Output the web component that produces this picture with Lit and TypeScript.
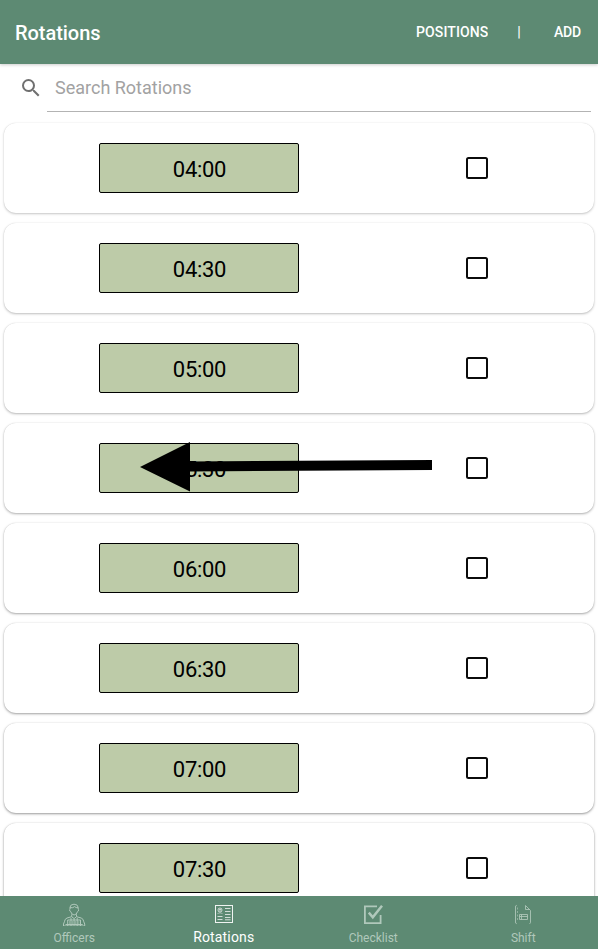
import { LitElement, html, css, svg } from "lit";
import { customElement, property } from "lit/decorators.js";
import { classMap } from "lit/directives/class-map.js";

const TIMES = ["04:00", "04:30", "05:00", "05:30", "06:00", "06:30", "07:00", "07:30"];

const officers = svg`
  <path d="M8 7V5.2Q8.2 2.4 12 2.2Q16 2.4 16.2 5.4V7M8 5.7Q11 6.2 12.6 4.6Q14 6 16 5.7M8.4 7Q7.2 7.2 7.8 9L8.7 9.6Q9.5 12.6 12.1 13Q14.7 12.6 15.5 9.6L16.4 9Q17 7.2 15.8 7M9.7 12.3V14.7L5 16Q2.6 17 2.4 19.8L1.5 22V24H22.7V22L21.8 19.8Q21.6 17 19.2 16L14.5 14.7V12.3M9.7 14.7L12.1 16.6L14.5 14.7M5.7 18H18.5V24M5.7 18V24M9 16V24M15.2 16V24M12.1 17V23.5M3.5 22.5H20.7"/>
  <path d="M7.6 19v4M10.6 19v4M13.6 19v4M16.8 19v4" opacity=".6"/>`;
const rotations = svg`
  <g opacity=".9">
    <rect x="3.5" y="3.5" width="17" height="17"/>
    <circle cx="8" cy="8" r="2" opacity=".75"/><circle cx="8" cy="7.8" r=".5"/>
    <path d="M5.5 11.5q2.5-1.4 5 0" opacity=".5"/>
    <path d="M13 6.5h5.5M13 9.5h5.5M13 12.5h5.5M5.5 14.5h5M13 15.5h5.5M5.5 17.5h5M13 17.8h5.5" stroke-width=".8"/>
  </g>`;
const checklist = svg`
  <path stroke-width="1.8" d="M16 4.4H3.9V21.1H19.6V13"/>
  <path stroke-width="2.5" d="M7.8 10.6L11.8 15.2L21 3.8"/>`;
const shift = svg`
  <path d="M5.8 3.5H5.2Q4.5 3.5 4.5 5V20Q4.5 21.5 5.2 21.5H5.8M14.5 3.5V7.5H19M14.5 3.5L19.5 8.5V20.5Q19.5 21.5 18.5 21.5M8.5 12.5H16.5V17.5H8.5ZM8.5 14.5H16.5M10.5 12.5V17.5" opacity=".85"/>
  <path d="M6.5 5.5v2M6.5 9v2M6.5 12.5v2M6.5 16v2" opacity=".6"/>`;

@customElement("rotation-card")
export class RotationCard extends LitElement {
  @property() time = "";
  @property({ type: Boolean }) arrow = false;

  static styles = css`
    :host { display: block; position: relative; height: 90px; flex: none; }
    .card {
      height: 100%; border-radius: 12px; background: #fff;
      box-shadow: 0 1px 2.5px rgba(0, 0, 0, var(--depth, .25)), 0 0 1px rgba(0, 0, 0, .14);
      display: grid; grid-template-columns: 390px 166px; align-items: center;
    }
    .time {
      box-sizing: border-box; width: 200px; height: 50px; justify-self: center;
      border: 1px solid #000; border-radius: 2px; background: #bdcba8;
      font-size: 22px; line-height: 51px; text-align: center; color: #000;
      letter-spacing: -.3px; padding-left: 1px;
    }
    .check {
      box-sizing: border-box; width: 22px; height: 22px; justify-self: center;
      border: 2px solid #0b0b0b; border-radius: 2.5px;
    }
    .arrow { position: absolute; left: 136px; top: 19px; width: 292px; height: 50px; }
  `;

  render() {
    return html`
      <div class="card">
        <div class="time">${this.time}</div>
        <div class="check"></div>
      </div>
      ${this.arrow
        ? html`<svg class="arrow" viewBox="0 0 292 50">
            <path d="M0 25L50 0V19.5L292 18V28L50 29.5V49.5Z" />
          </svg>`
        : ""}
    `;
  }
}

@customElement("app-root")
export class AppRoot extends LitElement {
  static styles = css`
    :host {
      display: flex; flex-direction: column; height: 949px; overflow: hidden;
      background: #fff; font-family: Roboto, sans-serif;
    }
    header {
      position: relative; z-index: 1; box-sizing: border-box; flex: none; height: 64px;
      display: flex; align-items: center; padding: 0 17px 0 15px;
      background: #5d8a73; color: #fff; box-shadow: 0 1px 3px rgba(0, 0, 0, .2);
    }
    h1 { margin: 2px auto 0 0; font-size: 20px; font-weight: 500; line-height: 24px; letter-spacing: -.05px; }
    .action { font-size: 14px; font-weight: 500; line-height: 20px; }
    .positions { width: 72px; overflow: hidden; white-space: nowrap; letter-spacing: .1px; }
    .bar { width: 66px; text-align: center; box-sizing: border-box; padding-right: 4px; }
    .add { letter-spacing: -.2px; }
    .search {
      flex: none; height: 48px; box-sizing: border-box; padding: 0 7px 0 19px;
      display: flex;
    }
    .search svg { width: 24px; height: 24px; margin: 12px 4px 0 0; fill: #707070; }
    .field {
      flex: 1; border-bottom: 1px solid #b3b3b3; padding-left: 8px;
      font-size: 18px; line-height: 48px; color: #a2a2a2;
    }
    main {
      flex: 1; min-height: 0; overflow: hidden; padding: 11px 4px 0;
      display: flex; flex-direction: column; gap: 10px;
    }
    nav {
      position: relative; flex: none; height: 53px; background: #5d8a73;
      display: grid; grid-template-columns: repeat(4, 1fr);
    }
    .tab {
      display: flex; flex-direction: column; align-items: center;
      padding-top: 6px; padding-right: 1px; color: #b0c8bb; font-size: 12px; line-height: 16px;
    }
    .tab:last-child { padding-right: 0; }
    .tab svg { width: 24px; height: 24px; fill: none; stroke: currentColor; stroke-width: 1; margin-bottom: 4px; }
    .active { color: #fff; font-size: 14px; line-height: 15px; letter-spacing: .15px; }
  `;

  private tab(label: string, icon: unknown, active = false) {
    return html`<div class=${classMap({ tab: true, active })}>
      <svg viewBox="0 0 24 24">${icon}</svg><span>${label}</span>
    </div>`;
  }

  render() {
    return html`
      <header>
        <h1>Rotations</h1>
        <span class="action positions">POSITIONS</span>
        <span class="action bar">|</span>
        <span class="action add">ADD</span>
      </header>
      <div class="search">
        <svg viewBox="0 0 24 24">
          <path d="M15.5 14h-.79l-.28-.27A6.47 6.47 0 0 0 16 9.5 6.5 6.5 0 1 0 9.5 16c1.61 0 3.09-.59 4.23-1.57l.27.28v.79l5 4.99L20.49 19l-4.99-5zm-6 0C7.01 14 5 11.99 5 9.5S7.01 5 9.5 5 14 7.01 14 9.5 11.99 14 9.5 14z" />
        </svg>
        <div class="field">Search Rotations</div>
      </div>
      <main>
        ${TIMES.map(
          (time, i) => html`<rotation-card
            style="--depth: ${0.22 + i * 0.03}"
            .time=${time}
            .arrow=${time === "05:30"}
          ></rotation-card>`
        )}
      </main>
      <nav>
        ${this.tab("Officers", officers)} ${this.tab("Rotations", rotations, true)}
        ${this.tab("Checklist", checklist)} ${this.tab("Shift", shift)}
      </nav>
    `;
  }
}
